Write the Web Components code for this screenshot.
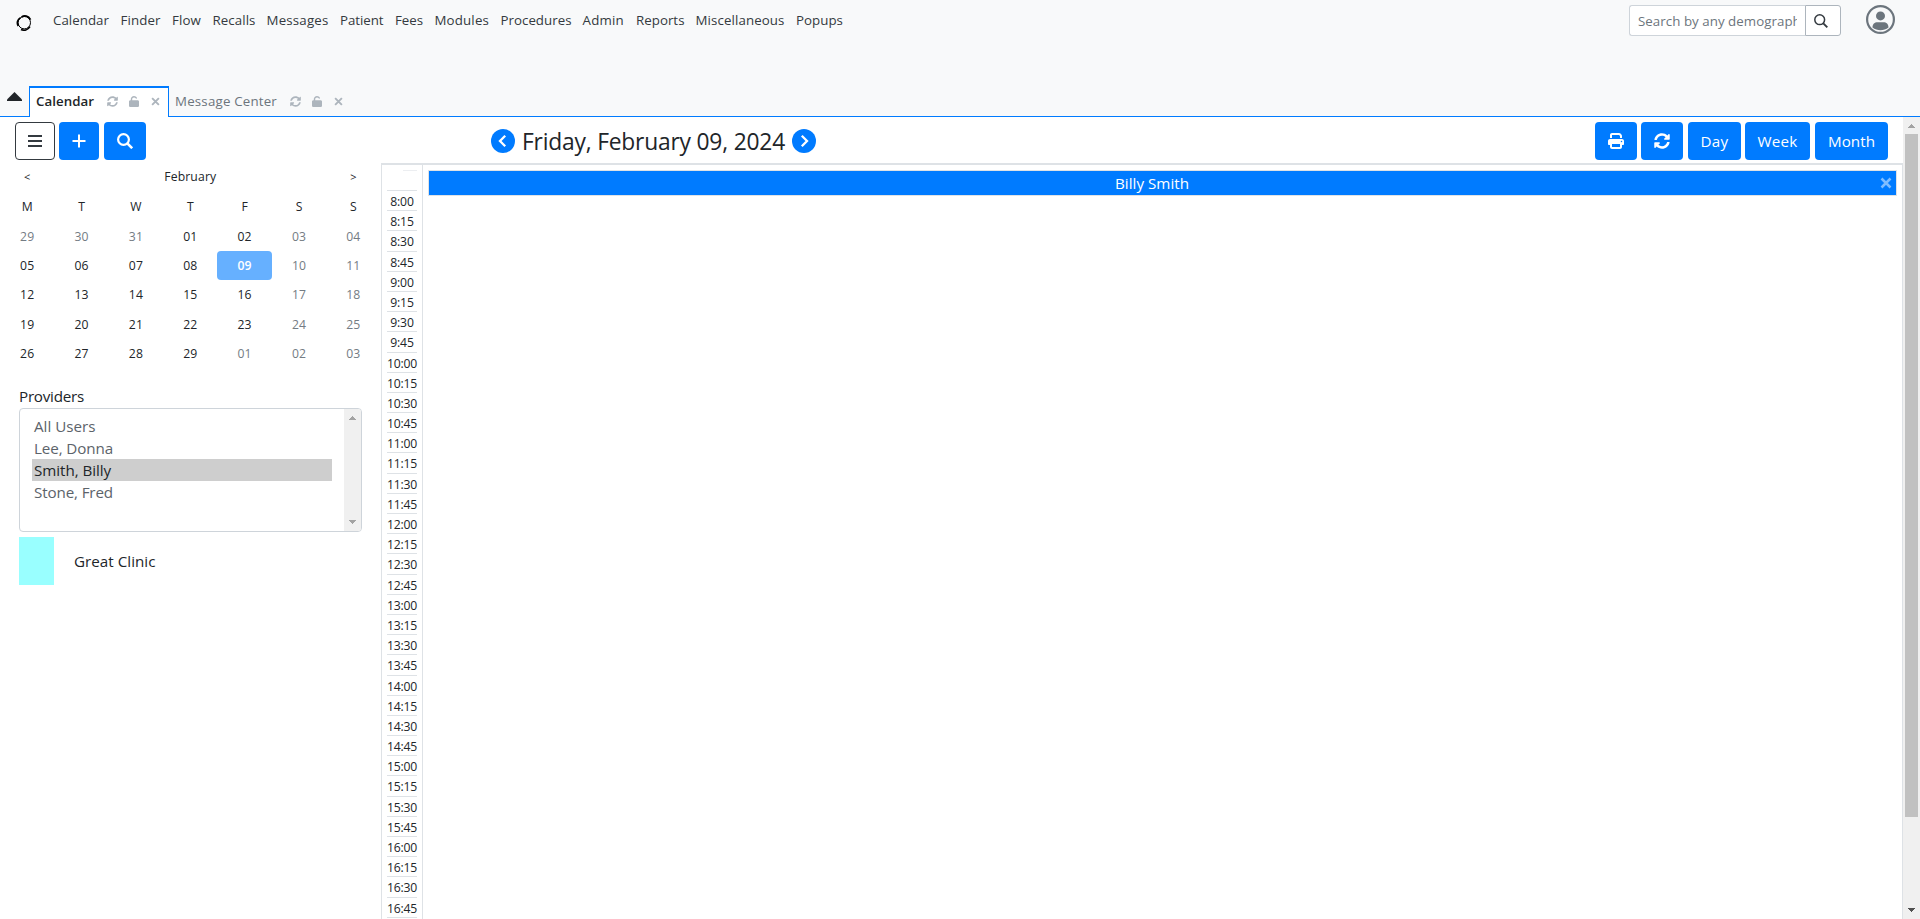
<!DOCTYPE html>
<html lang="en">
<head>
<meta charset="utf-8">
<title>Calendar</title>
<style>
html,body{margin:0;height:100%;overflow:hidden;background:#fff}
body{font-family:"Open Sans","Noto Sans",sans-serif;color:#212529;font-size:13.3px}
</style>
</head>
<body>
<clinic-app></clinic-app>
<script>
const make=(name,html,init)=>customElements.define(name,class extends HTMLElement{
  constructor(){super();this.attachShadow({mode:'open'})}
  connectedCallback(){this.shadowRoot.innerHTML=typeof html==='function'?html(this):html;if(init)init(this)}
});

/* One line of text whose tracking is adjusted to a given width */
make('fit-text','<style>:host{display:inline-block;white-space:nowrap;flex:none}span{display:inline-block}</style><span><slot></slot></span>',el=>{
  const w=parseFloat(el.getAttribute('w'));
  if(!w)return;
  const s=el.shadowRoot.querySelector('span');
  const nat=s.getBoundingClientRect().width;
  s.style.letterSpacing=((w-nat)/el.textContent.length)+'px';
  el.style.width=w+'px';
});

const ICONS={
  refresh:['0 0 512 512','<path d="M370.72 133.28C339.458 104.008 298.888 87.962 255.848 88c-77.458.068-144.328 53.178-162.791 126.85-1.344 5.363-6.122 9.15-11.651 9.15H24.103c-7.498 0-13.194-6.807-11.807-14.176C33.933 94.924 134.813 8 256 8c66.448 0 126.791 26.136 171.315 68.685L463.03 40.97C478.149 25.851 504 36.559 504 57.941V192c0 13.255-10.745 24-24 24H345.941c-21.382 0-32.09-25.851-16.971-40.971l41.75-41.749zM32 296h134.059c21.382 0 32.09 25.851 16.971 40.971l-41.75 41.75c31.262 29.273 71.835 45.319 114.876 45.28 77.418-.07 144.315-53.144 162.787-126.849 1.344-5.363 6.122-9.15 11.651-9.15h57.304c7.498 0 13.194 6.807 11.807 14.176C478.067 417.076 377.187 504 256 504c-66.448 0-126.791-26.136-171.315-68.685L48.97 471.03C33.851 486.149 8 475.441 8 454.059V320c0-13.255 10.745-24 24-24z"/>'],
  lock:['0 0 448 512','<path d="M144 144c0-44.2 35.8-80 80-80c31.900 0 59.400 18.600 72.300 45.700c7.600 16 26.700 22.800 42.600 15.200s22.800-26.700 15.200-42.600C331 33.700 281.500 0 224 0C144.500 0 80 64.500 80 144v48H64c-35.300 0-64 28.700-64 64V448c0 35.300 28.700 64 64 64H384c35.300 0 64-28.700 64-64V256c0-35.300-28.700-64-64-64H144V144z"/>'],
  times:['0 0 8 8','<path d="M1 1L7 7M7 1L1 7" fill="none" stroke="currentColor" stroke-width="1.700"/>'],
  bars:['0 0 14 12','<path d="M0 0h14v2H0zM0 5h14v2H0zM0 10h14v2H0z"/>'],
  plus:['0 0 14 14','<path d="M6 .5h2V6h5.500v2H8v5.500H6V8H.5V6H6z"/>'],
  search:['0 0 16 16','<g fill="none" stroke="currentColor" stroke-width="2.200"><circle cx="6.500" cy="6.500" r="5.400"/><path d="M10.300 10.300L15.200 15.200" stroke-width="2.600"/></g>'],
  searchthin:['0 0 14 14','<g fill="none" stroke="currentColor" stroke-width="1.500"><circle cx="5.700" cy="5.700" r="4.900"/><path d="M9.300 9.300L13.300 13.300" stroke-width="1.900"/></g>'],
  print:['0 0 512 512','<path d="M128 0C92.700 0 64 28.700 64 64v96h64V64H354.700L384 93.300V160h64V93.300c0-17-6.700-33.300-18.700-45.300L400 18.700C388 6.700 371.700 0 354.700 0H128zM384 352v96H128V352H384zm64 32h32c17.700 0 32-14.300 32-32V256c0-35.300-28.700-64-64-64H64c-35.300 0-64 28.700-64 64v96c0 17.700 14.300 32 32 32H64v64c0 35.300 28.700 64 64 64H384c35.300 0 64-28.700 64-64V384zM432 248a24 24 0 1 1 0 48 24 24 0 1 1 0-48z"/>'],
  left:['0 0 24 24','<circle cx="12" cy="12" r="12"/><path d="M14.200 6.800L9 12l5.200 5.200" fill="none" stroke="#fff" stroke-width="2.300"/>'],
  right:['0 0 24 24','<circle cx="12" cy="12" r="12"/><path d="M9.800 6.800L15 12l-5.200 5.200" fill="none" stroke="#fff" stroke-width="2.300"/>'],
  user:['0 0 29 29','<circle cx="14.500" cy="14.500" r="13.400" fill="none" stroke="currentColor" stroke-width="2.200"/><circle cx="14.500" cy="10.900" r="4.500"/><path d="M6.500 22.600C6.500 19 8.700 17.300 11.500 17.300h6c2.800 0 5 1.700 5 5.300-4.600 3.500-11.400 3.500-16 0z"/>'],
  logo:['0 0 16 16','<g fill="none" stroke="#000"><circle cx="8.300" cy="7.700" r="6.200" stroke-width="1"/><path d="M4.500 2.800C1.600 4.200.4 8 2.300 11M5.500 1.900C8.500.2 12.300.7 14.600 4.600M5 14.400c3 1.600 6.800.6 9-2.800" stroke-width="1.700"/></g>'],
  up:['0 0 15 9','<path d="M7.500 0L15 7.500V9H0V7.500z"/>'],
  arrowup:['0 0 7 4','<path d="M3 0h1v1h1v1h1v1h1v1H0V3h1V2h1V1h1z"/>'],
  arrowdown:['0 0 7 4','<path d="M3 4h1V3h1V2h1V1h1V0H0v1h1v1h1v1h1z"/>']
};
make('ui-icon',el=>{const [vb,p]=ICONS[el.getAttribute('name')];
  return `<style>:host{display:block;flex:none;width:${el.getAttribute('w')}px;height:${el.getAttribute('h')}px}svg{display:block;width:100%;height:100%;fill:currentColor}</style><svg viewBox="${vb}" preserveAspectRatio="none">${p}</svg>`});

make('main-menu',()=>{
  const items=[['Calendar',56],['Finder',40],['Flow',29],['Recalls',43],['Messages',62],['Patient',43.500],['Fees',28],['Modules',54.500],['Procedures',71],['Admin',41.500],['Reports',48.500],['Miscellaneous',89],['Popups',47]];
  const gaps=[11.500,11.500,11.500,11,11.500,11.500,11.500,11.500,11,12,11,11.500,0];
  return `<style>:host{display:flex;height:40px;line-height:40px;color:#343a40}</style>`+items.map(([t,w],i)=>`<fit-text w="${w}" style="margin-right:${gaps[i]}px">${t}</fit-text>`).join('')});

make('patient-search',`<style>:host{display:flex;height:31px;box-sizing:border-box}
.in{box-sizing:border-box;width:176px;border:1px solid #ced4da;border-right:0;border-radius:3px 0 0 3px;background:#fff;color:#6c757d;padding:0 8px;line-height:31px}
.clip{overflow:hidden;width:159px;height:29px}
.b{box-sizing:border-box;width:36px;border:1px solid #adb5bd;border-radius:0 3px 3px 0;background:#fff;display:flex;align-items:center;padding-left:8px;color:#343a40}</style>
<div class="in"><div class="clip"><fit-text w="179">Search by any demographics</fit-text></div></div><div class="b"><ui-icon name="searchthin" w="14" h="14"></ui-icon></div>`);

make('page-tab',el=>`<style>:host{display:flex;box-sizing:border-box;height:31px;padding:0 0 2px 6px;border:1px solid transparent;border-width:2px 1px 0;color:#6c757d;align-items:center}
:host([active]){background:#fff;border-color:#007bff;width:140px;color:#212529;font-weight:600}
ui-icon{color:#adb5bd}fit-text{height:27px;line-height:27px}</style>
<fit-text w="${el.getAttribute('tw')}">${el.getAttribute('label')}</fit-text>
<ui-icon name="refresh" w="11" h="11" style="margin-left:13px"></ui-icon><ui-icon name="lock" w="10" h="11" style="margin-left:11px"></ui-icon><ui-icon name="times" w="9" h="9" style="margin-left:12px"></ui-icon>`);

make('app-header',`<style>:host{display:flex;flex-direction:column;height:117px;box-sizing:border-box;background:#f8f9fa}
.top{display:flex;height:86px;align-items:flex-start}
.sp{flex:1}
.tabs{display:flex;height:31px;}
.gap{width:29px;border-bottom:1px solid #007bff;box-sizing:border-box;padding:6px 0 0 7px;color:#212529}
.rest{flex:1;border-bottom:1px solid #007bff;box-sizing:border-box}</style>
<div class="top"><ui-icon name="logo" w="16" h="16" style="margin:15px 21px 0 16px"></ui-icon><main-menu></main-menu><div class="sp"></div>
<patient-search style="margin:5px 25px 0 0"></patient-search><ui-icon name="user" w="29" h="29" style="margin:5px 25px 0 0;color:#6c757d"></ui-icon></div>
<div class="tabs"><div class="gap"><ui-icon name="up" w="15" h="9"></ui-icon></div><page-tab active label="Calendar" tw="58"></page-tab><div class="rest"><page-tab label="Message Center" tw="102" style="margin-left:-1px"></page-tab></div></div>`);

make('ui-button',`<style>:host{display:flex;align-items:center;justify-content:center;box-sizing:border-box;height:38px;border-radius:4px;background:#007bff;color:#fff;font-size:15.200px;line-height:38px;font-weight:400}
:host([outline]){background:#fff;color:#343a40;border:1px solid #343a40}</style><slot></slot>`);

make('cal-toolbar',`<style>:host{display:flex;height:46px;box-sizing:border-box;padding:5px 15px 0 15px}
.title{display:flex;height:38px;margin-left:345px;align-items:center;color:#007bff}
.title fit-text{color:#212529;font-size:22.800px;line-height:38px;margin:2px 7px 0}
.sp{flex:1}</style>
<ui-button outline style="width:40px"><ui-icon name="bars" w="14" h="12"></ui-icon></ui-button>
<ui-button style="width:40px;margin-left:4px"><ui-icon name="plus" w="14" h="14"></ui-icon></ui-button>
<ui-button style="width:42px;margin-left:5px"><ui-icon name="search" w="16" h="16"></ui-icon></ui-button>
<div class="title"><ui-icon name="left" w="24" h="24"></ui-icon><fit-text w="263">Friday, February 09, 2024</fit-text><ui-icon name="right" w="24" h="24"></ui-icon></div>
<div class="sp"></div>
<ui-button style="width:42px"><ui-icon name="print" w="16" h="16"></ui-icon></ui-button>
<ui-button style="width:42px;margin-left:4px"><ui-icon name="refresh" w="16" h="16"></ui-icon></ui-button>
<ui-button style="width:53px;margin-left:5px"><fit-text w="28">Day</fit-text></ui-button>
<ui-button style="width:65px;margin-left:4px"><fit-text w="40">Week</fit-text></ui-button>
<ui-button style="width:73px;margin-left:5px"><fit-text w="47">Month</fit-text></ui-button>`);

make('mini-calendar',()=>{
  const rows=['M T W T F S S','29 30 31 01 02 03 04','05 06 07 08 09 10 11','12 13 14 15 16 17 18','19 20 21 22 23 24 25','26 27 28 29 01 02 03'];
  let h='';
  rows.forEach((r,i)=>r.split(' ').forEach((d,j)=>{
    const dim=i>0&&(j>4||(i===1&&j<3)||(i===5&&j===4));
    const sel=i===2&&j===4;
    h+=`<div class="${dim?'dim':''}${sel?'sel':''}">${i?`<fit-text w="14.200">${d}</fit-text>`:d}</div>`}));
  return `<style>:host{display:grid;grid-template-columns:repeat(7,54.360px);grid-template-rows:29.400px;grid-auto-rows:29.330px;font-size:12.200px;text-align:center;line-height:29.300px;height:206px}
.dim{color:#747c84}.sel{background:#66b0ff;border-radius:4px;color:#fff;font-weight:600;margin:0 -.5px}.m{grid-column:2/7}.nav{font-size:11px;line-height:27.500px}.m{line-height:28.500px}</style>
<div class="nav">&lt;</div><div class="m"><fit-text w="52">February</fit-text></div><div class="nav">&gt;</div>${h}`});

make('provider-list',()=>{
  const o=[['All Users',61.500],['Lee, Donna',79],['Smith, Billy',77],['Stone, Fred',79]];
  return `<style>:host{display:flex;box-sizing:border-box;width:343px;height:124px;border:1px solid #ced4da;border-radius:4px;background:#fff;overflow:hidden;color:#5c636a;font-size:15.200px}
.l{flex:1;padding:6px 12px}.o{height:22px;line-height:22px;padding-left:2px}.o.s{background:#cecece;color:#212529}
.t{width:17px;background:#f0f0f0;display:flex;flex-direction:column;justify-content:space-between;align-items:center;padding:7px 0 7px;box-sizing:border-box;color:#a3a3a3}</style>
<div class="l">${o.map(([t,w],i)=>`<div class="o ${i===2?'s':''}"><fit-text w="${w}">${t}</fit-text></div>`).join('')}</div>
<div class="t"><ui-icon name="arrowup" w="7" h="4"></ui-icon><ui-icon name="arrowdown" w="7" h="4"></ui-icon></div>`});

make('side-panel',`<style>:host{display:block;width:381px;flex:none;font-size:15.200px}
.lab{padding-left:19px;height:24px;line-height:24px;margin-top:15px}
.c{display:flex;margin:5px 0 0 19px;height:48px;line-height:48px}.sw{width:35px;background:#9ff;margin-right:20px}</style>
<mini-calendar></mini-calendar><div class="lab"><fit-text w="65">Providers</fit-text></div>
<provider-list style="margin-left:19px"></provider-list>
<div class="c"><div class="sw"></div><fit-text w="81.500">Great Clinic</fit-text></div>`);

make('time-column',()=>{
  let h='';
  for(let m=480;m<=1005;m+=15){const t=Math.floor(m/60)+':'+String(m%60).padStart(2,'0');h+=`<div class="r"><fit-text w="${t.length===5?30:23.500}">${t}</fit-text></div>`}
  return `<style>:host{display:grid;grid-template-rows:26px;grid-auto-rows:20.1875px;box-sizing:border-box;width:42px;border:1px solid #dee2e6;border-width:0 1px;padding:0 5px;font-size:12.200px;text-align:center;line-height:21px}
.h{border-bottom:1px solid #dee2e6;padding-top:5px}.h i{display:block;height:1px;background:#eceef1;margin-left:16px}.r{border-bottom:1px solid #dee2e6}</style><div class="h"><i></i></div>${h}`});

make('day-view',`<style>:host{display:flex;flex:1;border-top:2px solid #dee2e6;border-right:1px solid #dee2e6;height:754px;overflow:hidden}
.d{flex:1;padding:5px 5px 0 5px}
.bar{display:flex;box-sizing:border-box;height:26px;border:1px solid #dee2e6;background:#007bff;color:#fff;font-size:15.200px;line-height:25px;align-items:center}
.m{flex:1;text-align:center;padding-right:5px;height:24px}</style>
<time-column></time-column><div class="d"><div class="bar"><div class="m"><fit-text w="74">Billy Smith</fit-text></div><ui-icon name="times" w="12" h="12" style="color:#80bdff;margin-right:4px"></ui-icon></div></div>`);

make('scroll-bar',`<style>:host{display:flex;flex-direction:column;align-items:center;width:17px;box-sizing:border-box;background:#f0f0f0;padding:7px 0;color:#a3a3a3}
.th{width:13px;height:683px;background:#c1c1c1;margin-top:6px}.sp{flex:1}</style>
<ui-icon name="arrowup" w="7" h="4"></ui-icon><div class="th"></div><div class="sp"></div><ui-icon name="arrowdown" w="7" h="4" style="color:#505050"></ui-icon>`);

make('clinic-app',`<style>:host{display:flex;flex-direction:column;height:919px;width:1920px;overflow:hidden}
.body{display:flex;height:802px}.main{flex:1}.row{display:flex}</style>
<app-header></app-header><div class="body"><div class="main"><cal-toolbar></cal-toolbar><div class="row"><side-panel></side-panel><day-view></day-view></div></div><scroll-bar></scroll-bar></div>`);
</script>
</body>
</html>
